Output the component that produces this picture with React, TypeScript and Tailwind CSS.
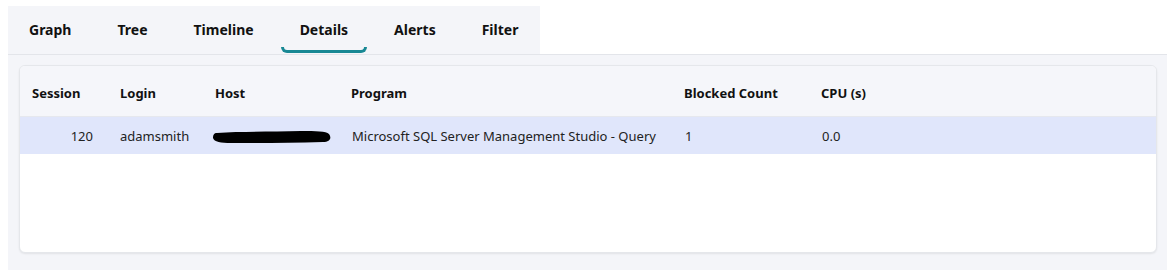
import React from "react";

const tabs = ["Graph", "Tree", "Timeline", "Details", "Alerts", "Filter"];

export default function App() {
  return (
    <div
      className="w-[1170px] h-[271px] bg-white pt-[6px] pl-[8px] pr-[3px] text-[#1b1b1b]"
      style={{ fontFamily: '"Segoe UI", "Noto Sans", "Open Sans", sans-serif' }}
    >
      <div className="flex w-[532px] h-[48px] bg-[#f4f5f9] pl-[21px]">
        {tabs.map((t, i) => (
          <div
            key={t}
            className={`relative flex items-center h-full pb-[2px] text-[14px] font-bold text-[#111] ${
              i === 0 ? "pl-0 pr-[23px]" : "px-[23px]"
            }`}
          >
            {t}
            {t === "Details" && (
              <span className="absolute left-[4px] right-[4px] bottom-[1px] h-[6px] border-b-[3px] border-x-[3px] border-t-0 border-[#188894] rounded-b-[7px]" />
            )}
          </div>
        ))}
      </div>
      <div className="h-[216px] bg-[#f4f5f9] border-t border-[#e3e5ea] pt-[10px] pl-[11px] pr-[10px] pb-[17px]">
        <div className="h-full bg-white rounded-[6px] border border-[#e5e7eb] shadow-[0_1px_2px_rgba(0,0,0,0.08)] overflow-hidden">
          <div className="flex h-[51px] items-center pt-[5px] bg-[#f5f6fa] border-b border-[#e6e8ee] text-[13px] font-bold text-[#111]">
            <div className="w-[88px] pl-[12px]">Session</div>
            <div className="w-[95px] pl-[12px]">Login</div>
            <div className="w-[136px] pl-[12px]">Host</div>
            <div className="w-[333px] pl-[12px]">Program</div>
            <div className="w-[137px] pl-[12px]">Blocked Count</div>
            <div className="pl-[12px]">CPU (s)</div>
          </div>
          <div className="flex h-[37px] items-center pt-[3px] bg-[#e0e6fb] text-[13px] text-[#222]">
            <div className="w-[88px] pr-[15px] text-right">120</div>
            <div className="w-[95px] pl-[12px]">adamsmith</div>
            <div className="w-[136px] pl-[8px] flex items-center">
              <svg width="122" height="16" viewBox="0 0 122 16">
                <path
                  d="M6 4 C 30 2, 60 3, 90 2 C 105 2, 115 2, 118 5 C 121 9, 119 13, 112 13 C 80 14, 50 14, 20 14 C 10 14, 3 13, 2 9 C 2 6, 3 4, 6 4 Z"
                  fill="#000"
                />
              </svg>
            </div>
            <div className="w-[333px] pl-[13px]">Microsoft SQL Server Management Studio - Query</div>
            <div className="w-[137px] pl-[13px]">1</div>
            <div className="pl-[13px]">0.0</div>
          </div>
        </div>
      </div>
    </div>
  );
}
